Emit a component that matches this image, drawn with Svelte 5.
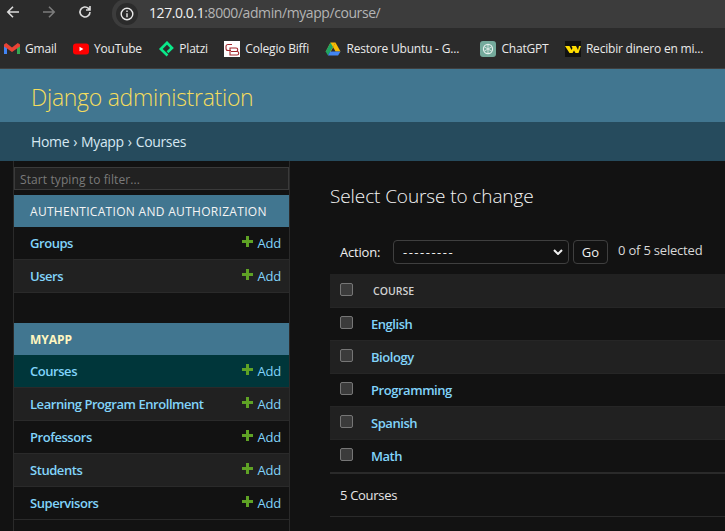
<script>
    const bookmarks = [
        { name: "Gmail", icon: "gmail" },
        { name: "YouTube", icon: "youtube" },
        { name: "Platzi", icon: "platzi" },
        { name: "Colegio Biffi", icon: "biffi" },
        { name: "Restore Ubuntu - G...", icon: "drive", cut: true },
        { name: "ChatGPT", icon: "chatgpt" },
        { name: "Recibir dinero en mi...", icon: "wu", cut: true }
    ];

    const apps = [
        {
            name: "Authentication and Authorization",
            models: ["Groups", "Users"]
        },
        {
            name: "Myapp",
            current: true,
            models: ["Courses", "Learning Program Enrollment", "Professors", "Students", "Supervisors"]
        }
    ];

    const courses = ["English", "Biology", "Programming", "Spanish", "Math"];
</script>

<!-- Browser chrome -->
<div class="toolbar">
    <div class="nav">
        <svg width="16" height="16" viewBox="0 0 16 16" class="back"><path d="M14 8H3M8 2.8L2.8 8 8 13.2" /></svg>
        <svg width="16" height="16" viewBox="0 0 16 16" class="forward"><path d="M2 8h11M8 2.8L13.2 8 8 13.2" /></svg>
        <svg width="16" height="16" viewBox="0 0 16 16" class="reload"><path d="M13 8a5 5 0 1 1-1.500-3.600L13 6M13 2v4H9" /></svg>
    </div>
    <div class="omnibox">
        <span class="site-info">
            <svg width="16" height="16" viewBox="0 0 16 16"><circle cx="8" cy="8" r="5.800" /><path d="M8 7.200v4M8 4.600v1.500" /></svg>
        </span>
        <span class="url"><b>127.0.0.1</b>:8000/admin/myapp/course/</span>
    </div>
</div>

<!-- Bookmarks -->
<div class="bookmarks">
    {#each bookmarks as mark}
        <span class="mark" class:cut={mark.cut}>
            {#if mark.icon === "gmail"}
                <svg width="16" height="16" viewBox="0 0 16 16">
                    <path d="M0 4v9h3V6z" fill="#4285f4" />
                    <path d="M13 6v7h3V4z" fill="#34a853" />
                    <path d="M0 3.500v2L3 7.500 8 11l5-3.500 3-2v-2L13.800 2 8 6.500 2.200 2z" fill="#ea4335" />
                </svg>
            {:else if mark.icon === "youtube"}
                <svg width="16" height="16" viewBox="0 0 16 16">
                    <rect y="2.500" width="16" height="11" rx="3" fill="#f00" />
                    <path d="M6.500 5.700v4.600L10.400 8z" fill="#fff" />
                </svg>
            {:else if mark.icon === "platzi"}
                <svg width="16" height="16" viewBox="0 0 16 16">
                    <path d="M9.500 14.500L2.800 8 9 1.800 14 7 9.500 11.200" fill="none" stroke="#0ae98a" stroke-width="2.600" />
                </svg>
            {:else if mark.icon === "biffi"}
                <svg width="16" height="16" viewBox="0 0 16 16">
                    <rect width="16" height="16" fill="#fff" />
                    <path d="M8 3.500H4a2 2 0 0 0-2 2v2a2 2 0 0 0 2 2h3M6 7h6a1.500 1.500 0 0 1 0 3.500H7h6a1.500 1.500 0 0 1 0 3.500H6z" fill="none" stroke="#a3262c" stroke-width="1.100" />
                </svg>
            {:else if mark.icon === "drive"}
                <svg width="16" height="16" viewBox="0 0 16 16">
                    <path d="M5.500 1.500h5L8 6.600 5.500 11H.6z" fill="#fbbc04" />
                    <path d="M5.500 1.500 .6 10.500 3 14.500 8 6z" fill="#1fa463" />
                    <path d="M10.500 1.500l5 9h-5L8 6z" fill="#fbbc04" />
                    <path d="M5.200 10.500h10.300l-2.400 4H3z" fill="#4285f4" />
                </svg>
            {:else if mark.icon === "chatgpt"}
                <svg width="16" height="16" viewBox="0 0 16 16">
                    <rect width="16" height="16" rx="3" fill="#74aa9c" />
                    <circle cx="8" cy="8" r="4.600" fill="none" stroke="#e4efec" stroke-width="1.100" />
                    <path d="M8 3.400v9.200M4 5.700l8 4.600M12 5.700l-8 4.600" stroke="#e4efec" stroke-width=".8" />
                </svg>
            {:else if mark.icon === "wu"}
                <svg width="16" height="16" viewBox="0 0 16 16">
                    <rect width="16" height="16" fill="#111" />
                    <path d="M0 5h4.500l2 4 1-2L6.500 5H11l2 4 1-4h2l-2.500 7h-3L9 9.500 7.500 12h-3z" fill="#ffdd00" />
                </svg>
            {/if}
            {mark.name}
        </span>
    {/each}
    <span class="mark outlook"></span>
</div>

<!-- Django header -->
<div class="branding">Django administration</div>
<div class="breadcrumbs">Home<span class="sep">›</span>Myapp<span class="sep">›</span>Courses</div>

<div class="page">

    <!-- Sidebar -->
    <aside class="sidebar">
        <input class="filter" type="text" placeholder="Start typing to filter..." />

        {#each apps as app}
            <div class="app" class:current-app={app.current}>
                <div class="caption">{app.name}</div>
                {#each app.models as model, index}
                    <div class="model" class:alt={index % 2 === 1} class:current={model === "Courses"}>
                        <span class="model-name">{model}</span>
                        <span class="add"><i class="plus"></i>Add</span>
                    </div>
                {/each}
            </div>
        {/each}
    </aside>

    <!-- Content -->
    <main class="content">
        <h1>Select Course to change</h1>

        <div class="actions">
            <span class="action-label">Action:</span>
            <span class="select">
                <span class="dashes">---------</span>
                <svg width="10" height="6" viewBox="0 0 10 6"><path d="M1 1l4 4 4-4" /></svg>
            </span>
            <button>Go</button>
            <span class="counter">0 of 5 selected</span>
        </div>

        <div class="row head">
            <i class="check"></i>
            <span>COURSE</span>
        </div>
        {#each courses as course, index}
            <div class="row" class:alt={index % 2 === 1}>
                <i class="check"></i>
                <span class="link">{course}</span>
            </div>
        {/each}

        <div class="paginator">5 Courses</div>
    </main>

</div>

<style>

    :global(body) {
        background: #121212;
        font-family: "Open Sans", "Noto Sans", sans-serif;
        overflow: hidden;
    }

    /* Browser toolbar */
    .toolbar {
        height: 29px;
        background: #2b2b2b;
        display: flex;
        align-items: flex-start;
    }

    .nav {
        width: 112px;
        display: flex;
        gap: 20px;
        padding: 4px 0 0 5px;
        box-sizing: border-box;
    }

    .nav svg {
        fill: none;
        stroke: #dcdcdc;
        stroke-width: 1.600;
    }

    .nav .forward {
        stroke: #7c7c7c;
    }

    .omnibox {
        flex: 1;
        height: 29px;
        background: #3c3c3c;
        border-radius: 14px 0 0 14px;
        display: flex;
        align-items: center;
        gap: 11px;
        padding-left: 4px;
        margin-top: -1px;
    }

    .site-info {
        width: 22px;
        height: 22px;
        border-radius: 50%;
        background: #2b2b2b;
        display: flex;
        align-items: center;
        justify-content: center;
    }

    .site-info svg {
        fill: none;
        stroke: #e8e8e8;
        stroke-width: 1.400;
    }

    .url {
        font-size: 14px;
        line-height: 18px;
        padding-bottom: 2px;
        color: #b4b4b4;
        letter-spacing: -.42px;
    }

    .url b {
        font-weight: 400;
        color: #f0f0f0;
    }

    /* Bookmarks bar */
    .bookmarks {
        height: 39px;
        background: #2b2b2b;
        border-bottom: 1px solid #3f3f3f;
        display: flex;
        align-items: center;
        padding-left: 4px;
        gap: 16.400px;
        overflow: hidden;
        box-sizing: content-box;
    }

    .mark {
        display: flex;
        align-items: center;
        gap: 5px;
        font-size: 12px;
        color: #eaeaea;
        white-space: nowrap;
        letter-spacing: -.2px;
    }

    .mark.cut {
        margin-right: 5px;
    }

    .outlook {
        width: 12px;
        height: 14px;
        background: #0f6cbd;
        flex: none;
    }

    /* Django header */
    .branding {
        height: 53px;
        box-sizing: border-box;
        background: #417690;
        color: #f5dd5d;
        font-size: 23px;
        font-weight: 300;
        line-height: 57px;
        padding-left: 31px;
        letter-spacing: -.28px;
    }

    .breadcrumbs {
        height: 39px;
        background: #264b5d;
        color: #d6e8f2;
        font-size: 14px;
        line-height: 39px;
        padding-left: 31px;
        letter-spacing: -.35px;
    }

    .sep {
        margin: 0 4px;
    }

    .page {
        display: flex;
        height: 370px;
    }

    /* Sidebar */
    .sidebar {
        width: 277px;
        margin-left: 13px;
        box-sizing: border-box;
        border-left: 1px solid #2a2a2a;
        border-right: 1px solid #2a2a2a;
        padding-top: 6px;
        flex: none;
    }

    .filter {
        display: block;
        width: 100%;
        height: 23px;
        box-sizing: border-box;
        background: #212121;
        border: 1px solid #3a3a3a;
        color: #888;
        font: 12px "Open Sans", sans-serif;
        letter-spacing: .1px;
        padding: 1px 5px 0;
        margin-bottom: 5px;
    }

    .filter::placeholder {
        color: #7a7a7a;
    }

    .app {
        margin-bottom: 30px;
    }

    .caption {
        height: 32px;
        background: #417690;
        color: #f4f4f4;
        font-size: 12px;
        line-height: 33px;
        padding-left: 16px;
        text-transform: uppercase;
        white-space: nowrap;
        letter-spacing: .3px;
    }

    .current-app .caption {
        color: #fff6c0;
        font-weight: 700;
        letter-spacing: -.05px;
    }

    .model {
        height: 32px;
        box-sizing: content-box;
        border-bottom: 1px solid #2a2a2a;
        display: flex;
        align-items: center;
        justify-content: space-between;
        padding: 0 8px 0 16px;
        background: #121212;
        font-size: 13px;
    }

    .model.alt {
        background: #212121;
    }

    .model.current {
        background: #00363a;
    }

    .model-name {
        color: #81d4fa;
        font-weight: 600;
        letter-spacing: -.45px;
    }

    .add {
        color: #81d4fa;
        display: flex;
        align-items: center;
        gap: 4px;
        letter-spacing: -.2px;
    }

    .plus {
        width: 11px;
        height: 11px;
        margin-top: -4px;
        background:
            linear-gradient(#5fa225, #5fa225) center / 11px 3px no-repeat,
            linear-gradient(#5fa225, #5fa225) center / 3px 11px no-repeat;
    }

    /* Content */
    .content {
        flex: 1;
        min-width: 0;
        padding: 0 0 0 40px;
    }

    h1 {
        margin: 0;
        padding-top: 22px;
        font-size: 19px;
        line-height: 26px;
        font-weight: 300;
        color: #f5f5f5;
        letter-spacing: -.1px;
    }

    .actions {
        display: flex;
        align-items: center;
        height: 26px;
        margin-top: 30px;
        padding-left: 10px;
        margin-bottom: 9px;
        font-size: 13px;
        color: #eeeeee;
        letter-spacing: -.2px;
        white-space: nowrap;
    }

    .action-label {
        width: 53px;
    }

    .select {
        width: 176px;
        height: 24px;
        box-sizing: border-box;
        border: 1px solid #3f3f3f;
        border-radius: 4px;
        background: #121212;
        padding: 0 5px 0 9px;
        display: flex;
        align-items: center;
        justify-content: space-between;
        font-size: 13px;
    }

    .dashes {
        letter-spacing: 1.500px;
    }

    .select svg {
        fill: none;
        stroke: #f0f0f0;
        stroke-width: 2;
    }

    button {
        width: 35px;
        height: 24px;
        margin-left: 4px;
        padding: 0;
        border: 1px solid #3f3f3f;
        border-radius: 4px;
        background: #121212;
        color: #f0f0f0;
        font: 13px "Open Sans", sans-serif;
    }

    .counter {
        margin-left: 10px;
        margin-top: -5px;
        color: #d8d8d8;
    }

    /* Result rows */
    .row {
        height: 32px;
        box-sizing: content-box;
        border-bottom: 1px solid #262626;
        display: flex;
        align-items: center;
        padding-left: 10px;
        font-size: 13px;
        background: #121212;
    }

    .row.alt {
        background: #212121;
    }

    .row.head {
        height: 33px;
        background: #212121;
        color: #d0d0d0;
        font-size: 10.500px;
        font-weight: 600;
    }

    .row.head span {
        margin-left: 20px;
        margin-top: 1px;
    }

    .check {
        width: 13px;
        height: 13px;
        flex: none;
        box-sizing: border-box;
        border: 1px solid #767676;
        border-radius: 2px;
        background: #3b3b3b;
        margin-top: -3px;
    }

    .link {
        color: #81d4fa;
        font-weight: 600;
        margin-left: 18px;
        letter-spacing: -.45px;
    }

    .paginator {
        height: 43px;
        border-top: 1px solid #2a2a2a;
        border-bottom: 1px solid #2a2a2a;
        margin-top: -1px;
        box-shadow: inset 0 1px 0 #2a2a2a;
        line-height: 44px;
        padding-left: 10px;
        font-size: 13px;
        color: #e6e6e6;
        letter-spacing: -.3px;
    }

</style>
